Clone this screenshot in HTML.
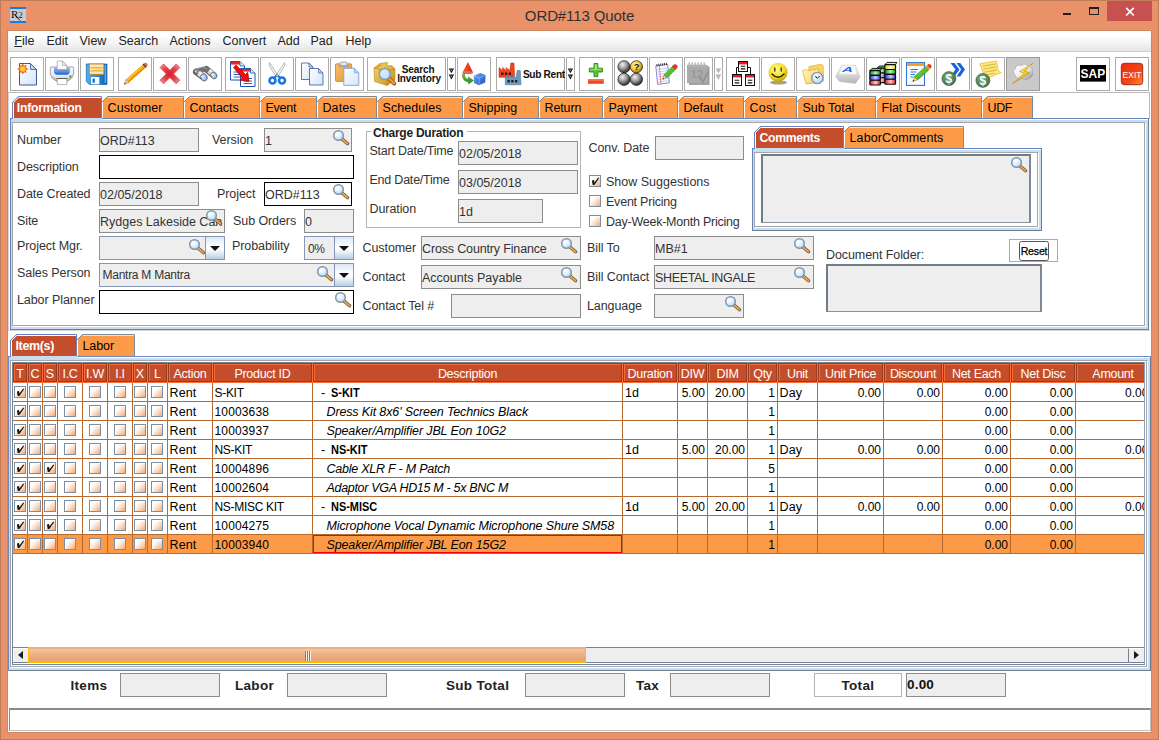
<!DOCTYPE html><html><head><meta charset="utf-8"><title>ORD#113 Quote</title><style>
*{box-sizing:border-box;margin:0;padding:0}
html,body{width:1159px;height:740px;overflow:hidden;background:#E9926A;font-family:"Liberation Sans",sans-serif;font-size:12.5px;color:#333}
.a{position:absolute}
.l{position:absolute;white-space:nowrap;line-height:14px;height:14px;color:#333;letter-spacing:-.08px}
.f{position:absolute;background:#EEE;border:1px solid #8C8C8C;white-space:nowrap;overflow:hidden;color:#333;line-height:14px;padding:5px 0 0 0;letter-spacing:0}
.f.w{background:#fff;border:1px solid #000}
.f.c{border-color:#8496B4;}
.ab{position:absolute;border:1px solid #8496B4;background:linear-gradient(#DCE7F3,#fff 45%,#fff 55%,#B8CFE5)}
.ab:after{content:"";position:absolute;left:4px;top:9px;border:5px solid transparent;border-top-color:#111;border-bottom-width:0}
.b{font-weight:bold}
.cb{position:absolute;width:12px;height:12px;border:1px solid #7C8EA4;box-shadow:inset 1px 1px 0 #fff;background:linear-gradient(135deg,#fff 28%,#FCE3D0 55%,#F6A874 100%)}
.cb.k:after{content:"";position:absolute;left:0;top:0;width:10px;height:10px;background:#151515;clip-path:polygon(1.9px 4.5px,4px 4px,4.4px 6.4px,8.3px 1.6px,9.1px 2.3px,4.4px 9px,2.7px 9px)}
.th{position:absolute;top:363px;height:19px;background:#C44D2C;border:1px solid #DC6A3E;outline:0;color:#fff;text-align:center;line-height:14px;padding-top:2px;white-space:nowrap;overflow:hidden}
.td{position:absolute;white-space:nowrap;line-height:14px;height:14px;color:#000;letter-spacing:.1px}
.r{text-align:right}
.i{font-style:italic}
</style></head><body>
<div class="a" style="left:0;top:0;width:1159px;height:740px;background:#E9926A;border:1px solid #C17C5A"></div>
<div id="root" class="a" style="left:0;top:0;width:1159px;height:740px">
<div class="a" style="left:0;top:5.7px;width:1159px;text-align:center;font-size:15px;line-height:20px;color:#303030;letter-spacing:-.1px">ORD#113 Quote</div>
<div class="a" style="left:10px;top:7px;width:16px;height:16px;background:#C8CCD2;border-top:2px solid #1F7AD2;border-bottom:2px solid #1F7AD2"></div>
<div class="a" style="left:11px;top:8px;font-family:'Liberation Serif',serif;font-size:11px;line-height:13px;color:#111">R</div>
<div class="a" style="left:18.5px;top:10px;font-family:'Liberation Serif',serif;font-size:8.5px;line-height:10px;color:#111">2</div>
<svg class="a" style="left:10px;top:7px" width="16" height="16"><path d="M5 8 L10 13.5" stroke="#111" stroke-width="1"/></svg>
<div class="a" style="left:1107px;top:1px;width:45px;height:20px;background:#C75050"></div>
<svg class="a" style="left:1107px;top:1px" width="45" height="20"><path d="M19.2 6.9 L26.8 14.5 M26.8 6.9 L19.2 14.5" stroke="#fff" stroke-width="1.7"/></svg>
<div class="a" style="left:1063px;top:13px;width:8px;height:2px;background:#1E1E1E"></div>
<div class="a" style="left:1089px;top:7px;width:10px;height:8px;border:1px solid #1E1E1E;border-top-width:2px"></div>
<div class="a" style="left:7px;top:30px;width:1145px;height:703px;background:#D08660"></div>
<div class="a" style="left:8px;top:31px;width:1143px;height:701px;background:#fff"></div>
<div class="a" style="left:8px;top:31px;width:1143px;height:20px;background:linear-gradient(#fff,#fff 25%,#E6E6E6)"></div>
<div class="a" style="left:8px;top:51px;width:1143px;height:1px;background:#CFCFCF"></div>
<div class="l" style="left:14.3px;top:34px;color:#222;letter-spacing:0"><u>F</u>ile</div>
<div class="l" style="left:46.5px;top:34px;color:#222;letter-spacing:0">Edit</div>
<div class="l" style="left:79.5px;top:34px;color:#222;letter-spacing:0">View</div>
<div class="l" style="left:118.5px;top:34px;color:#222;letter-spacing:0">Search</div>
<div class="l" style="left:169.5px;top:34px;color:#222;letter-spacing:0">Actions</div>
<div class="l" style="left:222.5px;top:34px;color:#222;letter-spacing:0">Convert</div>
<div class="l" style="left:277.5px;top:34px;color:#222;letter-spacing:0">Add</div>
<div class="l" style="left:310.5px;top:34px;color:#222;letter-spacing:0">Pad</div>
<div class="l" style="left:345.5px;top:34px;color:#222;letter-spacing:0">Help</div>
<div class="a" style="left:10px;top:57px;width:34px;height:34px;border:1px solid #ABABAB;background:#fff"></div>
<div class="a" style="left:45px;top:57px;width:34px;height:34px;border:1px solid #ABABAB;background:#fff"></div>
<div class="a" style="left:80px;top:57px;width:34px;height:34px;border:1px solid #ABABAB;background:#fff"></div>
<div class="a" style="left:118px;top:57px;width:34px;height:34px;border:1px solid #ABABAB;background:#fff"></div>
<div class="a" style="left:153px;top:57px;width:34px;height:34px;border:1px solid #ABABAB;background:#fff"></div>
<div class="a" style="left:188px;top:57px;width:34px;height:34px;border:1px solid #ABABAB;background:#fff"></div>
<div class="a" style="left:225px;top:57px;width:34px;height:34px;border:1px solid #ABABAB;background:#fff"></div>
<div class="a" style="left:260px;top:57px;width:34px;height:34px;border:1px solid #ABABAB;background:#fff"></div>
<div class="a" style="left:295px;top:57px;width:34px;height:34px;border:1px solid #ABABAB;background:#fff"></div>
<div class="a" style="left:330px;top:57px;width:34px;height:34px;border:1px solid #ABABAB;background:#fff"></div>
<div class="a" style="left:367px;top:57px;width:79px;height:34px;border:1px solid #ABABAB;background:#fff"></div>
<div class="a" style="left:447px;top:57px;width:9px;height:34px;border:1px solid #ABABAB;background:#fff"></div>
<div class="a" style="left:457px;top:57px;width:34px;height:34px;border:1px solid #ABABAB;background:#fff"></div>
<div class="a" style="left:496px;top:57px;width:69px;height:34px;border:1px solid #ABABAB;background:#fff"></div>
<div class="a" style="left:566px;top:57px;width:9px;height:34px;border:1px solid #ABABAB;background:#fff"></div>
<div class="a" style="left:579px;top:57px;width:34px;height:34px;border:1px solid #ABABAB;background:#fff"></div>
<div class="a" style="left:614px;top:57px;width:34px;height:34px;border:1px solid #ABABAB;background:#fff"></div>
<div class="a" style="left:649px;top:57px;width:34px;height:34px;border:1px solid #ABABAB;background:#fff"></div>
<div class="a" style="left:684px;top:57px;width:29px;height:34px;border:1px solid #ABABAB;background:#fff"></div>
<div class="a" style="left:714px;top:57px;width:9px;height:34px;border:1px solid #ABABAB;background:#fff"></div>
<div class="a" style="left:726px;top:57px;width:34px;height:34px;border:1px solid #ABABAB;background:#fff"></div>
<div class="a" style="left:761px;top:57px;width:34px;height:34px;border:1px solid #ABABAB;background:#fff"></div>
<div class="a" style="left:796px;top:57px;width:34px;height:34px;border:1px solid #ABABAB;background:#fff"></div>
<div class="a" style="left:831px;top:57px;width:34px;height:34px;border:1px solid #ABABAB;background:#fff"></div>
<div class="a" style="left:866px;top:57px;width:34px;height:34px;border:1px solid #ABABAB;background:#fff"></div>
<div class="a" style="left:901px;top:57px;width:34px;height:34px;border:1px solid #ABABAB;background:#fff"></div>
<div class="a" style="left:936px;top:57px;width:34px;height:34px;border:1px solid #ABABAB;background:#fff"></div>
<div class="a" style="left:971px;top:57px;width:34px;height:34px;border:1px solid #ABABAB;background:#fff"></div>
<div class="a" style="left:1006px;top:57px;width:34px;height:34px;border:1px solid #9A9A9A;background:#C9C9C9"></div>
<div class="a" style="left:1076px;top:57px;width:34px;height:34px;border:1px solid #ABABAB;background:#fff"></div>
<div class="a" style="left:1115px;top:57px;width:34px;height:34px;border:1px solid #ABABAB;background:#fff"></div>
<div class="a" style="left:8px;top:92px;width:1142px;height:1px;background:#B9B9B9"></div>
<div class="a" style="left:1149px;top:92px;width:1px;height:27px;background:#B9B9B9"></div>
<svg width="0" height="0" style="position:absolute"><defs>
<linearGradient id="gpage" x1="0" y1="0" x2="1" y2="1"><stop offset="0" stop-color="#fff"/><stop offset="1" stop-color="#D3E4F7"/></linearGradient>
<radialGradient id="gsun2"><stop offset="0" stop-color="#FFE840"/><stop offset=".6" stop-color="#FFC220"/><stop offset="1" stop-color="#F86A20"/></radialGradient>
<radialGradient id="gsun"><stop offset="0" stop-color="#FFE033"/><stop offset=".45" stop-color="#FFC21A"/><stop offset=".7" stop-color="#F2451E"/><stop offset="1" stop-color="#F2451E" stop-opacity=".15"/></radialGradient>
<linearGradient id="gprn" x1="0" y1="0" x2="0" y2="1"><stop offset="0" stop-color="#EDEDED"/><stop offset=".55" stop-color="#E4E4E4"/><stop offset="1" stop-color="#A6A6A6"/></linearGradient>
<linearGradient id="gblue" x1="0" y1="0" x2="0" y2="1"><stop offset="0" stop-color="#8CBAF8"/><stop offset=".55" stop-color="#5C98F0"/><stop offset="1" stop-color="#1C5CE0"/></linearGradient>
<linearGradient id="gflop" x1="0" y1="0" x2="1" y2="0"><stop offset="0" stop-color="#4FB0EE"/><stop offset=".6" stop-color="#1D86D8"/><stop offset="1" stop-color="#0E62B0"/></linearGradient>
<radialGradient id="gx" cx=".5" cy=".5" r=".6"><stop offset="0" stop-color="#DE1B22"/><stop offset=".6" stop-color="#E2464E"/><stop offset="1" stop-color="#EE9096"/></radialGradient>
<radialGradient id="glens" cx=".4" cy=".35" r=".7"><stop offset="0" stop-color="#E4F1FF"/><stop offset=".6" stop-color="#9CC6F6"/><stop offset="1" stop-color="#6CA4EA"/></radialGradient>
<linearGradient id="gbino" x1="0" y1="0" x2="0" y2="1"><stop offset="0" stop-color="#B8B8B8"/><stop offset=".5" stop-color="#6E6E6E"/><stop offset="1" stop-color="#3C3C3C"/></linearGradient>
<linearGradient id="gclip" x1="0" y1="0" x2="1" y2="1"><stop offset="0" stop-color="#F7C070"/><stop offset="1" stop-color="#E89530"/></linearGradient>
<linearGradient id="gbox" x1="0" y1="0" x2="1" y2="1"><stop offset="0" stop-color="#F8D868"/><stop offset="1" stop-color="#C89018"/></linearGradient>
<linearGradient id="gcube" x1="0" y1="0" x2="1" y2="1"><stop offset="0" stop-color="#6FA8F8"/><stop offset="1" stop-color="#1F4FC0"/></linearGradient>
<linearGradient id="gcone" x1="0" y1="0" x2="1" y2="0"><stop offset="0" stop-color="#F8603C"/><stop offset="1" stop-color="#D81E10"/></linearGradient>
<linearGradient id="ggreen" x1="0" y1="0" x2="0" y2="1"><stop offset="0" stop-color="#6ED04A"/><stop offset="1" stop-color="#1E8A1A"/></linearGradient>
<radialGradient id="gball" cx=".38" cy=".32" r=".75"><stop offset="0" stop-color="#F4F4F4"/><stop offset=".45" stop-color="#9C9C9C"/><stop offset=".85" stop-color="#3A3A3A"/><stop offset="1" stop-color="#111"/></radialGradient>
<radialGradient id="gbally" cx=".4" cy=".35" r=".75"><stop offset="0" stop-color="#FFF6B0"/><stop offset=".5" stop-color="#F6C82A"/><stop offset=".9" stop-color="#8A6A10"/><stop offset="1" stop-color="#222"/></radialGradient>
<radialGradient id="gsmile" cx=".42" cy=".35" r=".75"><stop offset="0" stop-color="#FFFB9A"/><stop offset=".55" stop-color="#F4DC22"/><stop offset=".9" stop-color="#B79A10"/><stop offset="1" stop-color="#7A6408"/></radialGradient>
<linearGradient id="gfold" x1="0" y1="0" x2="1" y2="1"><stop offset="0" stop-color="#FFF6C4"/><stop offset="1" stop-color="#F6D060"/></linearGradient>
<radialGradient id="gclock" cx=".4" cy=".35" r=".7"><stop offset="0" stop-color="#fff"/><stop offset="1" stop-color="#A8D8F8"/></radialGradient>
<linearGradient id="gkey" x1="0" y1="0" x2="0" y2="1"><stop offset="0" stop-color="#fff"/><stop offset="1" stop-color="#B4B4B4"/></linearGradient>
<radialGradient id="gdol" cx=".4" cy=".35" r=".75"><stop offset="0" stop-color="#7FA878"/><stop offset="1" stop-color="#3D6E3A"/></radialGradient>
<linearGradient id="gexit" x1="0" y1="0" x2="1" y2="1"><stop offset="0" stop-color="#F02A10"/><stop offset=".6" stop-color="#F04818"/><stop offset="1" stop-color="#F8982C"/></linearGradient>
<linearGradient id="gpen" x1="0" y1="0" x2="1" y2="1"><stop offset="0" stop-color="#8EE04A"/><stop offset="1" stop-color="#2C9A1C"/></linearGradient>
<linearGradient id="gbG" x1="0" y1="0" x2="1" y2="0"><stop offset="0" stop-color="#1C8A1C"/><stop offset=".55" stop-color="#B8F0B8"/><stop offset="1" stop-color="#1C8A1C"/></linearGradient>
<linearGradient id="gbB" x1="0" y1="0" x2="1" y2="0"><stop offset="0" stop-color="#2030D8"/><stop offset=".55" stop-color="#C8D0FF"/><stop offset="1" stop-color="#2030D8"/></linearGradient>
<linearGradient id="gbR" x1="0" y1="0" x2="1" y2="0"><stop offset="0" stop-color="#D81C1C"/><stop offset=".55" stop-color="#FFC8C8"/><stop offset="1" stop-color="#D81C1C"/></linearGradient>
<linearGradient id="gbY" x1="0" y1="0" x2="1" y2="0"><stop offset="0" stop-color="#D8D018"/><stop offset=".55" stop-color="#FFFFC0"/><stop offset="1" stop-color="#D8D018"/></linearGradient>
<linearGradient id="gcloud" x1="0" y1="0" x2="1" y2="1"><stop offset="0" stop-color="#fff"/><stop offset=".5" stop-color="#F0F0F0"/><stop offset="1" stop-color="#8A8A8A"/></linearGradient>
</defs></svg>
<svg class="a" style="left:10px;top:57px;font-family:'Liberation Sans',sans-serif" width="34" height="34" viewBox="0 0 34 34"><path d="M9.5 6.5 H20.5 L26.5 12.5 V28.0 H9.5 Z" fill="url(#gpage)" stroke="#3D5A99" stroke-width="1"/><path d="M20.5 6.5 V12.5 H26.5 Z" fill="#BCD6F2" stroke="#3D5A99" stroke-width="0.8"/><path d="M18.3 11.9 L15.8 13.2 L16.7 15.9 L14.0 15.0 L12.7 17.5 L11.4 15.0 L8.7 15.9 L9.6 13.2 L7.1 11.9 L9.6 10.6 L8.7 7.9 L11.4 8.8 L12.7 6.3 L14.0 8.8 L16.7 7.9 L15.8 10.6 Z" fill="#F0401C" opacity=".9"/><circle cx="12.7" cy="11.9" r="3.6" fill="url(#gsun2)"/></svg>
<svg class="a" style="left:45px;top:57px;font-family:'Liberation Sans',sans-serif" width="34" height="34" viewBox="0 0 34 34"><path d="M5.3 10.4 Q5.3 9.9 6 9.9 H28 Q28.7 9.9 28.7 10.4 V17 Q28 21.6 22 24.6 H12 Q6 21.6 5.3 17 Z" fill="url(#gprn)" stroke="#8E8E8E" stroke-width=".7"/><path d="M6.5 11 H27.5 V16.5 Q26 20 21.5 22.5 H12.5 Q8 20 6.5 16.5 Z" fill="#fff" opacity=".4"/><path d="M9 10.2 H24.8 V14.6 Q24.8 17.7 21.6 17.7 H12.2 Q9 17.7 9 14.6 Z" fill="url(#gblue)"/><rect x="11.9" y="12" width="10.2" height="1.7" fill="#8A8A9C"/><path d="M12.2 12.6 V4 H17.4 L21.8 8.4 V12.6 Z" fill="#FAFAFA" stroke="#A2A2A2" stroke-width=".7"/><path d="M17.4 4 V8.4 H21.8 Z" fill="#E4E4E4" stroke="#A2A2A2" stroke-width=".6"/><rect x="12.2" y="21.6" width="9.6" height="6" fill="#FDFDFD" stroke="#A0A0A0" stroke-width=".7"/><path d="M11.6 21.5 H22.4" stroke="#5A5A5A" stroke-width="1"/><circle cx="25.3" cy="19.4" r="1.2" fill="#28B428"/></svg>
<svg class="a" style="left:80px;top:57px;font-family:'Liberation Sans',sans-serif" width="34" height="34" viewBox="0 0 34 34"><path d="M6.3 7 H27 V27.5 H9.5 L6.3 24.5 Z" fill="url(#gflop)" stroke="#0F62B4" stroke-width=".7"/><rect x="9.3" y="7" width="14.5" height="10.3" fill="#FBE9B8" stroke="#C8862A" stroke-width=".9"/><path d="M10.5 10.7 H22.6 M10.5 13.7 H22.6" stroke="#F2B23A" stroke-width="1.6"/><rect x="11" y="20" width="8.3" height="7.3" fill="#F4F8FC"/><rect x="12.6" y="21.6" width="2.2" height="4" fill="#1D63C4"/><rect x="24.6" y="8" width="1.6" height="18" fill="#7CC6F4" opacity=".7"/></svg>
<svg class="a" style="left:118px;top:57px;font-family:'Liberation Sans',sans-serif" width="34" height="34" viewBox="0 0 34 34"><path d="M8 26 L11 19 L14 17 L9 27 Z" fill="#DDD" opacity=".7"/><path d="M6.3 27.6 L7.6 22.4 L11.4 25.6 Z" fill="#E8C49A" stroke="#9A7A5A" stroke-width=".4"/><path d="M6.3 27.6 L6.8 25.6 L7.9 26.5 Z" fill="#333"/><path d="M7.9 22.6 L24.6 7.5 L27.7 10.7 L11 25.4 Z" fill="#F5A50A"/><path d="M8.9 23.4 L25.5 8.5" stroke="#FFD060" stroke-width="1"/><path d="M10.4 24.9 L27.1 10.1" stroke="#D07F00" stroke-width=".9"/><path d="M24.6 7.5 L25.8 6.5 L28.9 9.7 L27.7 10.7 Z" fill="#333"/><path d="M25.8 6.5 Q27.4 5 29.2 6.6 Q30.4 8.2 28.9 9.7 Z" fill="#F46A3C"/></svg>
<svg class="a" style="left:153px;top:57px;font-family:'Liberation Sans',sans-serif" width="34" height="34" viewBox="0 0 34 34"><path d="M7 10.6 L10.6 7 L16.9 13.3 L23.2 7 L26.8 10.6 L20.5 16.9 L26.8 23.2 L23.2 26.8 L16.9 20.5 L10.6 26.8 L7 23.2 L13.3 16.9 Z" fill="url(#gx)" stroke="#D8434A" stroke-width=".8" stroke-linejoin="round"/></svg>
<svg class="a" style="left:188px;top:57px;font-family:'Liberation Sans',sans-serif" width="34" height="34" viewBox="0 0 34 34"><path d="M8.4 14.8 L15.8 20.4" stroke="#5E5E5E" stroke-width="6.8" stroke-linecap="round"/><path d="M18.4 12.2 L25.8 18.5" stroke="#6A6A6A" stroke-width="6.4" stroke-linecap="round"/><path d="M7 11.8 L15.8 9.4 L21 12 L18.6 15.6 L11.4 14.4 Z" fill="#727272"/><path d="M8 12 L15.6 10 L19.6 12" stroke="#A4A4A4" stroke-width=".8" fill="none"/><path d="M8.4 13.8 L15.8 19.6" stroke="#909090" stroke-width="3.4" stroke-linecap="round"/><path d="M10.6 16 L15.2 19.6" stroke="#E2E2E2" stroke-width="5" stroke-linecap="butt"/><path d="M11 14.8 L16 18.7" stroke="#FAFAFA" stroke-width="1.6"/><path d="M20.8 13.8 L25.2 17.6" stroke="#D6D6D6" stroke-width="4.8" stroke-linecap="butt"/><path d="M21.4 12.8 L26 16.6" stroke="#F6F6F6" stroke-width="1.5"/><circle cx="7.6" cy="14.6" r="1" fill="#E8E8E8" opacity=".8"/><ellipse cx="15.9" cy="20.4" rx="3.1" ry="3.7" fill="url(#glens)" stroke="#5C5C5C" stroke-width=".7" transform="rotate(-35 15.9 20.4)"/><ellipse cx="25.8" cy="18.5" rx="2.9" ry="3.5" fill="url(#glens)" stroke="#5C5C5C" stroke-width=".7" transform="rotate(-35 25.8 18.5)"/></svg>
<svg class="a" style="left:225px;top:57px;font-family:'Liberation Sans',sans-serif" width="34" height="34" viewBox="0 0 34 34"><path d="M5.5 4.5 H15.0 L19.5 9.0 V23.0 H5.5 Z" fill="#fff" stroke="#2150B0" stroke-width="1"/><rect x="6.0" y="5.0" width="9" height="2.6" fill="#F0281C"/><path d="M15.0 4.5 V9.0 H19.5" fill="#DCE8F8" stroke="#2150B0" stroke-width=".8"/><path d="M8.5 15.0 H16.5 M8.5 17.5 H16.5 M8.5 20.0 H16.5" stroke="#2150B0" stroke-width=".9"/><path d="M15.5 11.5 H25.5 L30.0 16.0 V29.5 H15.5 Z" fill="#fff" stroke="#2150B0" stroke-width="1"/><rect x="16.0" y="12.0" width="9.5" height="2.6" fill="#F0281C"/><path d="M25.5 11.5 V16.0 H30.0" fill="#DCE8F8" stroke="#2150B0" stroke-width=".8"/><path d="M18.5 21.5 H27.0 M18.5 24.0 H27.0 M18.5 26.5 H27.0" stroke="#2150B0" stroke-width=".9"/><path d="M8.5 10.5 L11 8 L20.5 17.5 L22.8 15.2 L24 24.5 L14.8 23.2 L17.1 20.9 Z" fill="#F00A0A" stroke="#8A0000" stroke-width=".6" stroke-linejoin="round"/></svg>
<svg class="a" style="left:260px;top:57px;font-family:'Liberation Sans',sans-serif" width="34" height="34" viewBox="0 0 34 34"><path d="M9.5 5.5 Q8.5 7 10 10 L16.5 20 L18.3 18.6 Z" fill="#F2F2F2" stroke="#9C9C9C" stroke-width=".7"/><path d="M24.5 5.5 Q25.5 7 24 10 L17.5 20 L15.7 18.6 Z" fill="#F8F8F8" stroke="#9C9C9C" stroke-width=".7"/><circle cx="17" cy="17.6" r=".9" fill="#777"/><circle cx="12.5" cy="23.5" r="3" fill="none" stroke="#1F74E0" stroke-width="2.6"/><circle cx="22" cy="23.5" r="3" fill="none" stroke="#1F74E0" stroke-width="2.6"/><path d="M14.2 21 L16.3 18.8 M20.3 21 L17.9 18.8" stroke="#1F74E0" stroke-width="2"/></svg>
<svg class="a" style="left:295px;top:57px;font-family:'Liberation Sans',sans-serif" width="34" height="34" viewBox="0 0 34 34"><path d="M6.5 6 H14.0 L18.0 10 V22.5 H6.5 Z" fill="url(#gpage)" stroke="#44609C" stroke-width="0.85"/><path d="M14.0 6 V10 H18.0 Z" fill="#BCD6F2" stroke="#44609C" stroke-width="0.68"/><path d="M14.5 11.5 H23.5 L28.0 16.0 V28.0 H14.5 Z" fill="url(#gpage)" stroke="#44609C" stroke-width="0.85"/><path d="M23.5 11.5 V16.0 H28.0 Z" fill="#BCD6F2" stroke="#44609C" stroke-width="0.68"/></svg>
<svg class="a" style="left:330px;top:57px;font-family:'Liberation Sans',sans-serif" width="34" height="34" viewBox="0 0 34 34"><rect x="5.5" y="6.8" width="16.2" height="17.6" rx="1.2" fill="url(#gclip)" stroke="#C98224" stroke-width=".8"/><path d="M10 9 V6.5 Q10 5 11.5 5 H15.8 Q17.2 5 17.2 6.5 V9 Z" fill="#E8E8E8" stroke="#8A8A8A" stroke-width=".7"/><rect x="9" y="8.2" width="9.2" height="1.8" fill="#B8B8B8" stroke="#888" stroke-width=".4"/><path d="M13.8 11.3 H24.3 L28.8 15.8 V28.3 H13.8 Z" fill="url(#gpage)" stroke="#8CA4D8" stroke-width="1"/><path d="M24.3 11.3 V15.8 H28.8 Z" fill="#BCD6F2" stroke="#8CA4D8" stroke-width="0.8"/></svg>
<svg class="a" style="left:367px;top:57px;font-family:'Liberation Sans',sans-serif" width="79" height="34" viewBox="0 0 79 34"><path d="M7 11 L13 6.5 L20.5 5.5 L20 9 L25 8.5 L28 12 V23 L20 28.5 L7.5 24.5 Z" fill="url(#gbox)" stroke="#B8861A" stroke-width=".6"/><path d="M7 11 L20 14 L28 12 M20 14 V28.5" stroke="#B07C10" stroke-width=".7" fill="none"/><path d="M7 11 L13 6.5 L15 8 L9.5 12 Z" fill="#E0A828"/><path d="M21.5 20.8 L27.3 26.6" stroke="#8E4A14" stroke-width="3.8" stroke-linecap="round"/><path d="M21.8 21.1 L27.1 26.4" stroke="#F59A3A" stroke-width="2.2" stroke-linecap="round"/><circle cx="17.8" cy="17" r="5.5" fill="url(#glens)" stroke="#8C9BAD" stroke-width="1.4"/><circle cx="17.8" cy="17" r="4.6" fill="#D8EEFC" opacity=".75"/><text x="34.8" y="15.6" font-size="10" font-weight="bold" fill="#111" letter-spacing="-.1">Search</text><text x="30.2" y="24.7" font-size="10" font-weight="bold" fill="#111" letter-spacing="-.15">Inventory</text></svg>
<svg class="a" style="left:447px;top:57px;font-family:'Liberation Sans',sans-serif" width="9" height="34" viewBox="0 0 9 34"><path d="M1.7 11.4 H7.1 L4.4 16.2 Z" fill="#111"/><path d="M3.6 12.4 L4.4 13.6 L5.2 12.4" stroke="#fff" stroke-width=".55" fill="none"/><path d="M1.7 17.6 H7.1 L4.4 22.4 Z" fill="#111"/><path d="M3.6 18.6 L4.4 19.8 L5.2 18.6" stroke="#fff" stroke-width=".55" fill="none"/></svg>
<svg class="a" style="left:457px;top:57px;font-family:'Liberation Sans',sans-serif" width="34" height="34" viewBox="0 0 34 34"><path d="M10.9 5 L16 15.5 Q11 18 5.5 15.5 Z" fill="url(#gcone)"/><ellipse cx="10.8" cy="15.6" rx="5.3" ry="1.6" fill="#E86A50"/><path d="M7 17.5 Q6.5 22.5 11 23.5 L11 21 L16 24.5 L11 28 L11 26 Q4.5 25 5 18 Z" fill="url(#ggreen)" stroke="#1C7A16" stroke-width=".5" transform="translate(.5 -1)"/><path d="M16.8 18.8 L23 16 L28.6 18 L28.2 25.5 L22 28.2 L17 26 Z" fill="url(#gcube)"/><path d="M16.8 18.8 L22.4 20.8 L28.6 18 M22.4 20.8 L22 28.2" stroke="#9CC4FF" stroke-width=".6" fill="none"/></svg>
<svg class="a" style="left:496px;top:57px;font-family:'Liberation Sans',sans-serif" width="69" height="34" viewBox="0 0 69 34"><path d="M3 20.3 V10.5 L6.6 13.5 V10.5 L10.2 13.5 V10.5 L13.8 13.5 L14.8 6 H18 L18.7 20.3 Z" fill="#F4421C" stroke="#C02A10" stroke-width=".5"/><rect x="5.2" y="15.6" width="2.2" height="2.2" fill="#111"/><rect x="9" y="15.6" width="2.2" height="2.2" fill="#111"/><rect x="12.8" y="15.6" width="2.2" height="2.2" fill="#111"/><path d="M9.3 27.8 V18.0 L12.9 21.0 V18.0 L16.5 21.0 V18.0 L20.1 21.0 L21.1 13.5 H24.3 L25.0 27.8 Z" fill="#6E98B8" stroke="#4A6E8C" stroke-width=".5"/><rect x="11.5" y="23.1" width="2.2" height="2.2" fill="#111"/><rect x="15.3" y="23.1" width="2.2" height="2.2" fill="#111"/><rect x="19.1" y="23.1" width="2.2" height="2.2" fill="#111"/><text x="26.9" y="20.9" font-size="10.2" font-weight="bold" fill="#111" letter-spacing="-.35">Sub Rent</text></svg>
<svg class="a" style="left:566px;top:57px;font-family:'Liberation Sans',sans-serif" width="9" height="34" viewBox="0 0 9 34"><path d="M1.7 11.4 H7.1 L4.4 16.2 Z" fill="#111"/><path d="M3.6 12.4 L4.4 13.6 L5.2 12.4" stroke="#fff" stroke-width=".55" fill="none"/><path d="M1.7 17.6 H7.1 L4.4 22.4 Z" fill="#111"/><path d="M3.6 18.6 L4.4 19.8 L5.2 18.6" stroke="#fff" stroke-width=".55" fill="none"/></svg>
<svg class="a" style="left:579px;top:57px;font-family:'Liberation Sans',sans-serif" width="34" height="34" viewBox="0 0 34 34"><path d="M15 6.5 H18.8 V11.2 H23.5 V15 H18.8 V19.7 H15 V15 H10.3 V11.2 H15 Z" fill="#62C23C" stroke="#1E8C14" stroke-width=".9"/><path d="M15.9 7.4 H17.9 V12.1 H22.6 V12.8 H11.2 V12.1 H15.9 Z" fill="#B4EC98" opacity=".85"/><rect x="9" y="22.2" width="15.8" height="4.6" fill="#F0481E"/><rect x="9" y="22.2" width="15.8" height="1.6" fill="#F87850"/></svg>
<svg class="a" style="left:614px;top:57px;font-family:'Liberation Sans',sans-serif" width="34" height="34" viewBox="0 0 34 34"><circle cx="10" cy="9.8" r="6.1" fill="url(#gball)" stroke="#111" stroke-width=".7"/><circle cx="10" cy="22.3" r="6.1" fill="url(#gball)" stroke="#111" stroke-width=".7"/><circle cx="22.4" cy="22.3" r="6.1" fill="url(#gball)" stroke="#111" stroke-width=".7"/><circle cx="22.4" cy="9.8" r="6.1" fill="url(#gbally)" stroke="#111" stroke-width=".7"/><text x="19.7" y="13.2" font-size="9.5" font-weight="bold" fill="#222">?</text></svg>
<svg class="a" style="left:649px;top:57px;font-family:'Liberation Sans',sans-serif" width="34" height="34" viewBox="0 0 34 34"><path d="M6.8 9 L18.6 7.4 L20.4 25.8 L8.6 27.4 Z" fill="#FCFCFF" stroke="#6A6AC8" stroke-width=".8"/><path d="M8.2 12.5 L18.8 11 M8.5 15 L19 13.5 M8.8 17.5 L19.2 16 M9 20 L19.5 18.5 M9.3 22.5 L19.8 21 M9.6 25 L20 23.5" stroke="#9AB0F0" stroke-width=".6"/><path d="M10.3 9 L12 26.8" stroke="#F07070" stroke-width=".9"/><path d="M7.5 8.2 L18.5 6.8" stroke="#333" stroke-width="2.2" stroke-dasharray="1 .9"/><path d="M13.6 22.4 L15 17.8 L18.2 20.6 Z" fill="#F0D0A0" stroke="#8A6A4A" stroke-width=".4"/><path d="M13.6 22.4 L14.1 20.8 L15.2 21.8 Z" fill="#333"/><path d="M15 17.8 L23.2 9.6 L26.4 12.6 L18.2 20.6 Z" fill="url(#gpen)" stroke="#1E7A14" stroke-width=".5"/><path d="M23.2 9.6 Q25 6.6 27.6 8 Q29.6 10 26.4 12.6 Z" fill="#E83A1C" stroke="#A01A0A" stroke-width=".4"/></svg>
<svg class="a" style="left:684px;top:57px;font-family:'Liberation Sans',sans-serif" width="29" height="34" viewBox="0 0 29 34"><rect x="5" y="9.5" width="20.5" height="18.4" fill="#9C9C9C"/><rect x="3" y="7.8" width="20.5" height="18.4" fill="#ABABAB"/><path d="M5.2 6 V9.8 M8.2 6 V9.8 M11.2 6 V9.8 M14.2 6 V9.8 M17.2 6 V9.8 M20.2 6 V9.8" stroke="#B8B8B8" stroke-width="1.6" stroke-linecap="round"/><text x="6.5" y="21" font-size="11.5" font-weight="bold" fill="#9A9A9A">12</text><path d="M15.5 20 L19 25 L24 15" stroke="#939393" stroke-width="1.8" fill="none"/></svg>
<svg class="a" style="left:714px;top:57px;font-family:'Liberation Sans',sans-serif" width="9" height="34" viewBox="0 0 9 34"><path d="M1.7 11.4 H7.1 L4.4 16.2 Z" fill="#A8A8A8"/><path d="M3.6 12.4 L4.4 13.6 L5.2 12.4" stroke="#fff" stroke-width=".55" fill="none"/><path d="M1.7 17.6 H7.1 L4.4 22.4 Z" fill="#A8A8A8"/><path d="M3.6 18.6 L4.4 19.8 L5.2 18.6" stroke="#fff" stroke-width=".55" fill="none"/></svg>
<svg class="a" style="left:726px;top:57px;font-family:'Liberation Sans',sans-serif" width="34" height="34" viewBox="0 0 34 34"><path d="M10.5 17.5 V10.5 H24.5 V17.5" stroke="#111" stroke-width="1" fill="none"/><rect x="12.5" y="4.5" width="9" height="10" fill="#fff" stroke="#111" stroke-width="1"/><rect x="13.0" y="5.0" width="8" height="2.4" fill="#F0141E"/><path d="M14.7 9.2 H19.3 M14.7 11.9 H19.3" stroke="#111" stroke-width="1.1"/><rect x="6.5" y="17.5" width="9" height="11" fill="#fff" stroke="#111" stroke-width="1"/><rect x="7.0" y="18.0" width="8" height="2.4" fill="#F0141E"/><path d="M8.7 23.2 H13.3 M8.7 25.9 H13.3" stroke="#111" stroke-width="1.1"/><rect x="19.5" y="17.5" width="9" height="11" fill="#fff" stroke="#111" stroke-width="1"/><rect x="20.0" y="18.0" width="8" height="2.4" fill="#F0141E"/><path d="M21.7 23.2 H26.3 M21.7 25.9 H26.3" stroke="#111" stroke-width="1.1"/></svg>
<svg class="a" style="left:761px;top:57px;font-family:'Liberation Sans',sans-serif" width="34" height="34" viewBox="0 0 34 34"><ellipse cx="17.5" cy="25.5" rx="8.5" ry="2" fill="#6A5208" opacity=".55"/><circle cx="17" cy="15.3" r="9.5" fill="url(#gsmile)"/><path d="M13.8 10.8 V14 M20.2 10.8 V14" stroke="#3A3208" stroke-width="1.3" stroke-linecap="round"/><path d="M11 17 Q17 23.5 23 17" stroke="#2A2406" stroke-width="1.4" fill="none" stroke-linecap="round"/></svg>
<svg class="a" style="left:796px;top:57px;font-family:'Liberation Sans',sans-serif" width="34" height="34" viewBox="0 0 34 34"><path d="M13 9.5 L24.8 7.2 L27.2 8.5 L27.5 24 L12 26.5 Z" fill="#F8D468" stroke="#E8A020" stroke-width=".6"/><path d="M6.5 13.5 L10.5 12.5 L12 13.8 L22.5 11.8 L24 25 L10 27 Z" fill="url(#gfold)" stroke="#E0A020" stroke-width=".6"/><circle cx="21.3" cy="21" r="5.6" fill="url(#gclock)" stroke="#8A98A8" stroke-width="1.4"/><path d="M19.3 19 L21.3 21.4 L23.6 19" stroke="#222" stroke-width="1" fill="none"/></svg>
<svg class="a" style="left:831px;top:57px;font-family:'Liberation Sans',sans-serif" width="34" height="34" viewBox="0 0 34 34"><path d="M4.5 19.5 L11 8 L24.5 8.5 L29 20 L24.5 26.5 L8.5 24.5 Z" fill="url(#gkey)" stroke="#C4C4C4" stroke-width=".6"/><path d="M11.5 8.6 L24 9 L26 17.5 L8 17 Z" fill="#FAFAFA" stroke="#DADADA" stroke-width=".5"/><text transform="translate(10.2 14.8) skewX(-28) scale(1.35 .66)" font-size="11" font-weight="bold" fill="#1F62E0">A</text></svg>
<svg class="a" style="left:866px;top:57px;font-family:'Liberation Sans',sans-serif" width="34" height="34" viewBox="0 0 34 34"><path d="M11 11.2 L13.2 9.0 H20.7 L19.5 11.2 Z" fill="#5FD05F" stroke="#0A0A0A" stroke-width=".9" stroke-linejoin="round"/><rect x="11" y="11.2" width="8.5" height="4.8" rx="1" fill="url(#gbG)" stroke="#0A0A0A" stroke-width="1.1"/><rect x="11" y="16" width="8.5" height="4.8" rx="1" fill="url(#gbB)" stroke="#0A0A0A" stroke-width="1.1"/><rect x="11" y="20.8" width="8.5" height="4.8" rx="1" fill="url(#gbR)" stroke="#0A0A0A" stroke-width="1.1"/><path d="M3.8 13.6 L6.0 11.399999999999999 H15.599999999999998 L14.399999999999999 13.6 Z" fill="#5FD05F" stroke="#0A0A0A" stroke-width=".9" stroke-linejoin="round"/><rect x="3.8" y="13.6" width="10.6" height="4.8" rx="1" fill="url(#gbG)" stroke="#0A0A0A" stroke-width="1.1"/><rect x="3.8" y="18.4" width="10.6" height="4.8" rx="1" fill="url(#gbB)" stroke="#0A0A0A" stroke-width="1.1"/><rect x="3.8" y="23.2" width="10.6" height="4.8" rx="1" fill="url(#gbR)" stroke="#0A0A0A" stroke-width="1.1"/><path d="M18.8 7.6 L21.0 5.3999999999999995 H30.8 L29.6 7.6 Z" fill="#F4F07A" stroke="#0A0A0A" stroke-width=".9" stroke-linejoin="round"/><rect x="18.8" y="7.6" width="10.8" height="4.9" rx="1" fill="url(#gbY)" stroke="#0A0A0A" stroke-width="1.1"/><rect x="18.8" y="12.5" width="10.8" height="4.9" rx="1" fill="url(#gbG)" stroke="#0A0A0A" stroke-width="1.1"/><rect x="18.8" y="17.4" width="10.8" height="4.9" rx="1" fill="url(#gbB)" stroke="#0A0A0A" stroke-width="1.1"/><rect x="18.8" y="22.3" width="10.8" height="4.9" rx="1" fill="url(#gbR)" stroke="#0A0A0A" stroke-width="1.1"/></svg>
<svg class="a" style="left:901px;top:57px;font-family:'Liberation Sans',sans-serif" width="34" height="34" viewBox="0 0 34 34"><rect x="5.5" y="5.6" width="18" height="22.8" fill="#F8FBFF" stroke="#2E78D0" stroke-width="1.1"/><rect x="6" y="6.1" width="17" height="2.8" fill="#F59A28"/><path d="M9.5 12.5 H17 M9.5 15 H15.5 M9.5 17.5 H14 M9.5 20 H12.5" stroke="#2E78D0" stroke-width="1"/><path d="M11.7 24.6 L13.4 19.6 L16.8 22.8 Z" fill="#F0D060" stroke="#8A6A2A" stroke-width=".4"/><path d="M11.7 24.6 L12.3 22.8 L13.5 23.9 Z" fill="#222"/><path d="M13.4 19.6 L24.6 9.6 L27.8 13 L16.8 22.8 Z" fill="url(#gpen)" stroke="#1E7A14" stroke-width=".5"/><path d="M24.6 9.6 L26 8.3 L29.2 11.7 L27.8 13 Z" fill="#E8A020"/><path d="M26 8.3 Q27.8 6 29.8 7.8 Q31.6 9.8 29.2 11.7 Z" fill="#E83A1C"/></svg>
<svg class="a" style="left:936px;top:57px;font-family:'Liberation Sans',sans-serif" width="34" height="34" viewBox="0 0 34 34"><path d="M14.5 6 H18.5 L23.5 12.5 L18.5 19.5 H14.5 L19.5 12.5 Z" fill="#1F62D8"/><path d="M20.5 6 H24.2 L29 12.5 L24.2 19.5 H20.5 L25.2 12.5 Z" fill="#1F62D8"/><circle cx="12.9" cy="21.6" r="7" fill="url(#gdol)" stroke="#2F5A2C" stroke-width=".6"/><text x="9.5" y="25.8" font-size="12" font-weight="bold" fill="#fff">$</text></svg>
<svg class="a" style="left:971px;top:57px;font-family:'Liberation Sans',sans-serif" width="34" height="34" viewBox="0 0 34 34"><path d="M8.8 6.8 L25.5 4 L27 13 Q28.5 15 30.2 15.5 L14.5 22 Z" fill="#FBEB8A" stroke="#F0B830" stroke-width=".8"/><path d="M11.5 9.2 L24.5 7 M12.2 12.2 L25.2 10 M13 15.2 L26 13 M13.8 18.2 L24 16.2" stroke="#E6C040" stroke-width="1.3"/><circle cx="11.9" cy="23.4" r="7" fill="url(#gdol)" stroke="#2F5A2C" stroke-width=".6"/><text x="8.5" y="27.599999999999998" font-size="12" font-weight="bold" fill="#fff">$</text></svg>
<svg class="a" style="left:1006px;top:57px;font-family:'Liberation Sans',sans-serif" width="34" height="34" viewBox="0 0 34 34"><path d="M9 18 Q5.5 14 9.5 11.5 Q10.5 7 15.5 8.5 Q19.5 5.5 22.5 9.5 Q27.5 10 26.5 15 Q28 19.5 23 21.5 Q19 24 16 21.5 Q11.5 23 9 18 Z" fill="url(#gcloud)" stroke="#9A9A9A" stroke-width=".5"/><path d="M26.8 6.3 L13.6 14.6 L18.6 16.2 L6.6 26.6 L23.6 16 L18.8 14.2 Z" fill="#F6C81C" stroke="#B88A08" stroke-width=".6" stroke-linejoin="round"/><path d="M25 8 L15.5 14.4 L19.4 15.6" stroke="#FFE878" stroke-width=".8" fill="none"/></svg>
<svg class="a" style="left:1076px;top:57px;font-family:'Liberation Sans',sans-serif" width="34" height="34" viewBox="0 0 34 34"><rect x="4" y="8" width="26" height="16.6" fill="#000"/><text x="4.6" y="21" font-size="12.5" font-weight="bold" fill="#fff" textLength="24.6" lengthAdjust="spacingAndGlyphs">SAP</text></svg>
<svg class="a" style="left:1115px;top:57px;font-family:'Liberation Sans',sans-serif" width="34" height="34" viewBox="0 0 34 34"><rect x="6.3" y="6.3" width="21.4" height="21.4" rx="3" fill="url(#gexit)" stroke="#A8180C" stroke-width=".9"/><text x="7.6" y="21" font-size="9.8" fill="#fff" textLength="19" lengthAdjust="spacingAndGlyphs">EXIT</text></svg>
<div class="a" style="left:10px;top:118px;width:1139px;height:212px;border:1px solid #6382BF;border-right-color:#6E7F95;border-bottom-color:#6E7F95;background:#C8DDF2"></div><div class="a" style="left:12px;top:122px;width:1133px;height:204px;border:1px solid #A5A5A5;background:#fff;box-shadow:1px 1px 0 #fff"></div>
<svg class="a" style="left:0;top:0" width="1159" height="740"><path d="M13 118 V102.5 L18.5 97 H101 V118 Z" fill="#C44D2C"/><path d="M13.5 118 V102.7 L18.7 97.5 H101" fill="none" stroke="#fff" stroke-width="1"/><path d="M12.5 119 V102.3 L18.3 96.5 H101.5 V118" fill="none" stroke="#6382BF" stroke-width="1"/><path d="M102 118 V101.5 L107.5 97 H183 V118 Z" fill="#FD9A48"/><path d="M102.5 118 V102" fill="none" stroke="#fff" stroke-width="1" shape-rendering="crispEdges"/><path d="M108 97.5 H183" fill="none" stroke="#FFE9D6" stroke-width="1" shape-rendering="crispEdges" opacity=".85"/><path d="M102.3 101.7 L107.5 96.5 H183.5 V118" fill="none" stroke="#7A8A99" stroke-width="1"/><path d="M184 118 V101.5 L189.5 97 H259 V118 Z" fill="#FD9A48"/><path d="M184.5 118 V102" fill="none" stroke="#fff" stroke-width="1" shape-rendering="crispEdges"/><path d="M190 97.5 H259" fill="none" stroke="#FFE9D6" stroke-width="1" shape-rendering="crispEdges" opacity=".85"/><path d="M184.3 101.7 L189.5 96.5 H259.5 V118" fill="none" stroke="#7A8A99" stroke-width="1"/><path d="M260 118 V101.5 L265.5 97 H316 V118 Z" fill="#FD9A48"/><path d="M260.5 118 V102" fill="none" stroke="#fff" stroke-width="1" shape-rendering="crispEdges"/><path d="M266 97.5 H316" fill="none" stroke="#FFE9D6" stroke-width="1" shape-rendering="crispEdges" opacity=".85"/><path d="M260.3 101.7 L265.5 96.5 H316.5 V118" fill="none" stroke="#7A8A99" stroke-width="1"/><path d="M317 118 V101.5 L322.5 97 H376 V118 Z" fill="#FD9A48"/><path d="M317.5 118 V102" fill="none" stroke="#fff" stroke-width="1" shape-rendering="crispEdges"/><path d="M323 97.5 H376" fill="none" stroke="#FFE9D6" stroke-width="1" shape-rendering="crispEdges" opacity=".85"/><path d="M317.3 101.7 L322.5 96.5 H376.5 V118" fill="none" stroke="#7A8A99" stroke-width="1"/><path d="M377 118 V101.5 L382.5 97 H462 V118 Z" fill="#FD9A48"/><path d="M377.5 118 V102" fill="none" stroke="#fff" stroke-width="1" shape-rendering="crispEdges"/><path d="M383 97.5 H462" fill="none" stroke="#FFE9D6" stroke-width="1" shape-rendering="crispEdges" opacity=".85"/><path d="M377.3 101.7 L382.5 96.5 H462.5 V118" fill="none" stroke="#7A8A99" stroke-width="1"/><path d="M463 118 V101.5 L468.5 97 H538 V118 Z" fill="#FD9A48"/><path d="M463.5 118 V102" fill="none" stroke="#fff" stroke-width="1" shape-rendering="crispEdges"/><path d="M469 97.5 H538" fill="none" stroke="#FFE9D6" stroke-width="1" shape-rendering="crispEdges" opacity=".85"/><path d="M463.3 101.7 L468.5 96.5 H538.5 V118" fill="none" stroke="#7A8A99" stroke-width="1"/><path d="M539 118 V101.5 L544.5 97 H602 V118 Z" fill="#FD9A48"/><path d="M539.5 118 V102" fill="none" stroke="#fff" stroke-width="1" shape-rendering="crispEdges"/><path d="M545 97.5 H602" fill="none" stroke="#FFE9D6" stroke-width="1" shape-rendering="crispEdges" opacity=".85"/><path d="M539.3 101.7 L544.5 96.5 H602.5 V118" fill="none" stroke="#7A8A99" stroke-width="1"/><path d="M603 118 V101.5 L608.5 97 H677 V118 Z" fill="#FD9A48"/><path d="M603.5 118 V102" fill="none" stroke="#fff" stroke-width="1" shape-rendering="crispEdges"/><path d="M609 97.5 H677" fill="none" stroke="#FFE9D6" stroke-width="1" shape-rendering="crispEdges" opacity=".85"/><path d="M603.3 101.7 L608.5 96.5 H677.5 V118" fill="none" stroke="#7A8A99" stroke-width="1"/><path d="M678 118 V101.5 L683.5 97 H743 V118 Z" fill="#FD9A48"/><path d="M678.5 118 V102" fill="none" stroke="#fff" stroke-width="1" shape-rendering="crispEdges"/><path d="M684 97.5 H743" fill="none" stroke="#FFE9D6" stroke-width="1" shape-rendering="crispEdges" opacity=".85"/><path d="M678.3 101.7 L683.5 96.5 H743.5 V118" fill="none" stroke="#7A8A99" stroke-width="1"/><path d="M744 118 V101.5 L749.5 97 H796 V118 Z" fill="#FD9A48"/><path d="M744.5 118 V102" fill="none" stroke="#fff" stroke-width="1" shape-rendering="crispEdges"/><path d="M750 97.5 H796" fill="none" stroke="#FFE9D6" stroke-width="1" shape-rendering="crispEdges" opacity=".85"/><path d="M744.3 101.7 L749.5 96.5 H796.5 V118" fill="none" stroke="#7A8A99" stroke-width="1"/><path d="M797 118 V101.5 L802.5 97 H875 V118 Z" fill="#FD9A48"/><path d="M797.5 118 V102" fill="none" stroke="#fff" stroke-width="1" shape-rendering="crispEdges"/><path d="M803 97.5 H875" fill="none" stroke="#FFE9D6" stroke-width="1" shape-rendering="crispEdges" opacity=".85"/><path d="M797.3 101.7 L802.5 96.5 H875.5 V118" fill="none" stroke="#7A8A99" stroke-width="1"/><path d="M876 118 V101.5 L881.5 97 H981 V118 Z" fill="#FD9A48"/><path d="M876.5 118 V102" fill="none" stroke="#fff" stroke-width="1" shape-rendering="crispEdges"/><path d="M882 97.5 H981" fill="none" stroke="#FFE9D6" stroke-width="1" shape-rendering="crispEdges" opacity=".85"/><path d="M876.3 101.7 L881.5 96.5 H981.5 V118" fill="none" stroke="#7A8A99" stroke-width="1"/><path d="M982 118 V101.5 L987.5 97 H1032 V118 Z" fill="#FD9A48"/><path d="M982.5 118 V102" fill="none" stroke="#fff" stroke-width="1" shape-rendering="crispEdges"/><path d="M988 97.5 H1032" fill="none" stroke="#FFE9D6" stroke-width="1" shape-rendering="crispEdges" opacity=".85"/><path d="M982.3 101.7 L987.5 96.5 H1032.5 V118" fill="none" stroke="#7A8A99" stroke-width="1"/></svg>
<div class="a" style="left:13px;top:118px;width:89px;height:1px;background:#C8DDF2"></div>
<div class="a" style="left:102px;top:119px;width:1046px;height:1px;background:#fff"></div>
<div class="l b" style="left:16.8px;top:101px;color:#fff;letter-spacing:-.2px;font-size:12.2px">Information</div>
<div class="l" style="left:107.5px;top:101px;color:#000;letter-spacing:0.12px">Customer</div>
<div class="l" style="left:189.5px;top:101px;color:#000;letter-spacing:0px">Contacts</div>
<div class="l" style="left:265.5px;top:101px;color:#000;letter-spacing:-0.24px">Event</div>
<div class="l" style="left:322.5px;top:101px;color:#000;letter-spacing:0.08px">Dates</div>
<div class="l" style="left:382.5px;top:101px;color:#000;letter-spacing:0.08px">Schedules</div>
<div class="l" style="left:468.5px;top:101px;color:#000;letter-spacing:0px">Shipping</div>
<div class="l" style="left:544.5px;top:101px;color:#000;letter-spacing:-0.13px">Return</div>
<div class="l" style="left:608.5px;top:101px;color:#000;letter-spacing:-0.11px">Payment</div>
<div class="l" style="left:683.5px;top:101px;color:#000;letter-spacing:0px">Default</div>
<div class="l" style="left:749.5px;top:101px;color:#000;letter-spacing:0.27px">Cost</div>
<div class="l" style="left:802.5px;top:101px;color:#000;letter-spacing:0px">Sub Total</div>
<div class="l" style="left:881.5px;top:101px;color:#000;letter-spacing:0px">Flat Discounts</div>
<div class="l" style="left:987.5px;top:101px;color:#000;letter-spacing:-0.37px">UDF</div>
<div class="l " style="left:17px;top:133px;">Number</div>
<div class="l " style="left:17px;top:160px;">Description</div>
<div class="l " style="left:17px;top:187px;">Date Created</div>
<div class="l " style="left:17px;top:214px;">Site</div>
<div class="l " style="left:17px;top:238.6px;">Project Mgr.</div>
<div class="l " style="left:17px;top:265.6px;">Sales Person</div>
<div class="l " style="left:17px;top:292.6px;">Labor Planner</div>
<div class="f " style="left:99px;top:128px;width:100px;height:24px;">ORD#113</div>
<div class="l " style="left:212px;top:133px;">Version</div>
<div class="f " style="left:264px;top:128px;width:88px;height:24px;">1</div>
<svg class="a" style="left:331.7px;top:128.8px" width="20" height="20" viewBox="0 0 20 20"><defs><radialGradient id="lg1" cx=".38" cy=".32" r=".75"><stop offset="0" stop-color="#fff"/><stop offset=".5" stop-color="#DDF1FF"/><stop offset="1" stop-color="#A4D4F6"/></radialGradient></defs><path d="M10 10 L15.6 14.8" stroke="#5E5248" stroke-width="3.3" stroke-linecap="round"/><path d="M10.6 10.5 L15.5 14.7" stroke="#F4A43C" stroke-width="1.9" stroke-linecap="round"/><circle cx="6.5" cy="6.5" r="4.8" fill="url(#lg1)" stroke="#8595A8" stroke-width="1.5"/></svg>
<div class="f w" style="left:99px;top:155px;width:255px;height:24px;"></div>
<div class="f " style="left:99px;top:182px;width:100px;height:24px;">02/05/2018</div>
<div class="l " style="left:217px;top:187px;">Project</div>
<div class="f w" style="left:264px;top:182px;width:88px;height:24px;">ORD#113</div>
<svg class="a" style="left:331.7px;top:182.8px" width="20" height="20" viewBox="0 0 20 20"><defs><radialGradient id="lg2" cx=".38" cy=".32" r=".75"><stop offset="0" stop-color="#fff"/><stop offset=".5" stop-color="#DDF1FF"/><stop offset="1" stop-color="#A4D4F6"/></radialGradient></defs><path d="M10 10 L15.6 14.8" stroke="#5E5248" stroke-width="3.3" stroke-linecap="round"/><path d="M10.6 10.5 L15.5 14.7" stroke="#F4A43C" stroke-width="1.9" stroke-linecap="round"/><circle cx="6.5" cy="6.5" r="4.8" fill="url(#lg2)" stroke="#8595A8" stroke-width="1.5"/></svg>
<div class="f " style="left:99px;top:209px;width:126px;height:24px;">Rydges Lakeside Can</div>
<svg class="a" style="left:205.4px;top:209.4px" width="20" height="20" viewBox="0 0 20 20"><defs><radialGradient id="lg3" cx=".38" cy=".32" r=".75"><stop offset="0" stop-color="#fff"/><stop offset=".5" stop-color="#DDF1FF"/><stop offset="1" stop-color="#A4D4F6"/></radialGradient></defs><path d="M10 10 L15.6 14.8" stroke="#5E5248" stroke-width="3.3" stroke-linecap="round"/><path d="M10.6 10.5 L15.5 14.7" stroke="#F4A43C" stroke-width="1.9" stroke-linecap="round"/><circle cx="6.5" cy="6.5" r="4.8" fill="url(#lg3)" stroke="#8595A8" stroke-width="1.5"/></svg>
<div class="l " style="left:233px;top:214px;">Sub Orders</div>
<div class="f " style="left:304px;top:209px;width:50px;height:24px;">0</div>
<div class="f c" style="left:99px;top:236px;width:107px;height:24px;"></div>
<svg class="a" style="left:187.8px;top:238.2px" width="20" height="20" viewBox="0 0 20 20"><defs><radialGradient id="lg4" cx=".38" cy=".32" r=".75"><stop offset="0" stop-color="#fff"/><stop offset=".5" stop-color="#DDF1FF"/><stop offset="1" stop-color="#A4D4F6"/></radialGradient></defs><path d="M10 10 L15.6 14.8" stroke="#5E5248" stroke-width="3.3" stroke-linecap="round"/><path d="M10.6 10.5 L15.5 14.7" stroke="#F4A43C" stroke-width="1.9" stroke-linecap="round"/><circle cx="6.5" cy="6.5" r="4.8" fill="url(#lg4)" stroke="#8595A8" stroke-width="1.5"/></svg>
<div class="ab" style="left:205px;top:236px;width:20px;height:24px"></div>
<div class="l " style="left:232px;top:239.3px;">Probability</div>
<div class="f c" style="left:304px;top:236px;width:31px;height:24px;padding-left:3px;padding-top:4.5px;font-size:12px;letter-spacing:-.3px">0%</div>
<div class="ab" style="left:334px;top:236px;width:20px;height:24px"></div>
<div class="f c" style="left:99px;top:263px;width:236px;height:24px;padding-left:2.5px;font-size:12px;padding-top:4px;letter-spacing:-.26px">Mantra M Mantra</div>
<svg class="a" style="left:316.0px;top:264.5px" width="20" height="20" viewBox="0 0 20 20"><defs><radialGradient id="lg5" cx=".38" cy=".32" r=".75"><stop offset="0" stop-color="#fff"/><stop offset=".5" stop-color="#DDF1FF"/><stop offset="1" stop-color="#A4D4F6"/></radialGradient></defs><path d="M10 10 L15.6 14.8" stroke="#5E5248" stroke-width="3.3" stroke-linecap="round"/><path d="M10.6 10.5 L15.5 14.7" stroke="#F4A43C" stroke-width="1.9" stroke-linecap="round"/><circle cx="6.5" cy="6.5" r="4.8" fill="url(#lg5)" stroke="#8595A8" stroke-width="1.5"/></svg>
<div class="ab" style="left:334px;top:263px;width:20px;height:24px"></div>
<div class="f w" style="left:99px;top:290px;width:255px;height:24px;"></div>
<svg class="a" style="left:333.5px;top:291.0px" width="20" height="20" viewBox="0 0 20 20"><defs><radialGradient id="lg6" cx=".38" cy=".32" r=".75"><stop offset="0" stop-color="#fff"/><stop offset=".5" stop-color="#DDF1FF"/><stop offset="1" stop-color="#A4D4F6"/></radialGradient></defs><path d="M10 10 L15.6 14.8" stroke="#5E5248" stroke-width="3.3" stroke-linecap="round"/><path d="M10.6 10.5 L15.5 14.7" stroke="#F4A43C" stroke-width="1.9" stroke-linecap="round"/><circle cx="6.5" cy="6.5" r="4.8" fill="url(#lg6)" stroke="#8595A8" stroke-width="1.5"/></svg>
<div class="a" style="left:366px;top:131px;width:215px;height:97px;border:1px solid #B4B4B4"></div>
<div class="a" style="left:371px;top:126px;width:96px;height:12px;background:#fff"></div>
<div class="l b" style="left:373px;top:126.19999999999999px;color:#1E1E1E;letter-spacing:-.25px;font-size:12px">Charge Duration</div>
<div class="l " style="left:369.5px;top:144px;letter-spacing:-.22px">Start Date/Time</div>
<div class="f " style="left:458px;top:141px;width:120px;height:24px;padding-top:5px">02/05/2018</div>
<div class="l " style="left:369.5px;top:173px;letter-spacing:-.22px">End Date/Time</div>
<div class="f " style="left:458px;top:170px;width:120px;height:24px;padding-top:5px">03/05/2018</div>
<div class="l " style="left:369.5px;top:202px;">Duration</div>
<div class="f " style="left:458px;top:199px;width:85px;height:24px;padding-top:5px">1d</div>
<div class="l " style="left:588.5px;top:141px;">Conv. Date</div>
<div class="f " style="left:655px;top:136px;width:89px;height:24px;"></div>
<div class="cb k" style="left:589px;top:175px"></div>
<div class="l " style="left:606px;top:174.5px;letter-spacing:0">Show Suggestions</div>
<div class="cb " style="left:589px;top:195px"></div>
<div class="l " style="left:606px;top:194.5px;letter-spacing:-.22px">Event Pricing</div>
<div class="cb " style="left:589px;top:215px"></div>
<div class="l " style="left:606px;top:214.5px;letter-spacing:-.24px">Day-Week-Month Pricing</div>
<div class="l " style="left:362.5px;top:241px;">Customer</div>
<div class="f " style="left:421px;top:236px;width:160px;height:24px;padding-top:5px;letter-spacing:-.15px">Cross Country Finance</div>
<svg class="a" style="left:560.2px;top:236.8px" width="20" height="20" viewBox="0 0 20 20"><defs><radialGradient id="lg7" cx=".38" cy=".32" r=".75"><stop offset="0" stop-color="#fff"/><stop offset=".5" stop-color="#DDF1FF"/><stop offset="1" stop-color="#A4D4F6"/></radialGradient></defs><path d="M10 10 L15.6 14.8" stroke="#5E5248" stroke-width="3.3" stroke-linecap="round"/><path d="M10.6 10.5 L15.5 14.7" stroke="#F4A43C" stroke-width="1.9" stroke-linecap="round"/><circle cx="6.5" cy="6.5" r="4.8" fill="url(#lg7)" stroke="#8595A8" stroke-width="1.5"/></svg>
<div class="l " style="left:362.5px;top:270px;">Contact</div>
<div class="f " style="left:421px;top:265px;width:160px;height:24px;padding-top:5px">Accounts Payable</div>
<svg class="a" style="left:560.2px;top:265.8px" width="20" height="20" viewBox="0 0 20 20"><defs><radialGradient id="lg8" cx=".38" cy=".32" r=".75"><stop offset="0" stop-color="#fff"/><stop offset=".5" stop-color="#DDF1FF"/><stop offset="1" stop-color="#A4D4F6"/></radialGradient></defs><path d="M10 10 L15.6 14.8" stroke="#5E5248" stroke-width="3.3" stroke-linecap="round"/><path d="M10.6 10.5 L15.5 14.7" stroke="#F4A43C" stroke-width="1.9" stroke-linecap="round"/><circle cx="6.5" cy="6.5" r="4.8" fill="url(#lg8)" stroke="#8595A8" stroke-width="1.5"/></svg>
<div class="l " style="left:362.5px;top:299px;">Contact Tel #</div>
<div class="f " style="left:451px;top:294px;width:130px;height:24px;"></div>
<div class="l " style="left:587px;top:241px;">Bill To</div>
<div class="f " style="left:654px;top:236px;width:160px;height:24px;padding-top:5px">MB#1</div>
<svg class="a" style="left:793.2px;top:236.8px" width="20" height="20" viewBox="0 0 20 20"><defs><radialGradient id="lg9" cx=".38" cy=".32" r=".75"><stop offset="0" stop-color="#fff"/><stop offset=".5" stop-color="#DDF1FF"/><stop offset="1" stop-color="#A4D4F6"/></radialGradient></defs><path d="M10 10 L15.6 14.8" stroke="#5E5248" stroke-width="3.3" stroke-linecap="round"/><path d="M10.6 10.5 L15.5 14.7" stroke="#F4A43C" stroke-width="1.9" stroke-linecap="round"/><circle cx="6.5" cy="6.5" r="4.8" fill="url(#lg9)" stroke="#8595A8" stroke-width="1.5"/></svg>
<div class="l " style="left:587px;top:270px;">Bill Contact</div>
<div class="f " style="left:654px;top:265px;width:160px;height:24px;padding-top:5px;letter-spacing:-.35px">SHEETAL INGALE</div>
<svg class="a" style="left:793.2px;top:265.8px" width="20" height="20" viewBox="0 0 20 20"><defs><radialGradient id="lg10" cx=".38" cy=".32" r=".75"><stop offset="0" stop-color="#fff"/><stop offset=".5" stop-color="#DDF1FF"/><stop offset="1" stop-color="#A4D4F6"/></radialGradient></defs><path d="M10 10 L15.6 14.8" stroke="#5E5248" stroke-width="3.3" stroke-linecap="round"/><path d="M10.6 10.5 L15.5 14.7" stroke="#F4A43C" stroke-width="1.9" stroke-linecap="round"/><circle cx="6.5" cy="6.5" r="4.8" fill="url(#lg10)" stroke="#8595A8" stroke-width="1.5"/></svg>
<div class="l " style="left:587px;top:299px;">Language</div>
<div class="f " style="left:654px;top:294px;width:90px;height:24px;"></div>
<svg class="a" style="left:724.0px;top:294.8px" width="20" height="20" viewBox="0 0 20 20"><defs><radialGradient id="lg11" cx=".38" cy=".32" r=".75"><stop offset="0" stop-color="#fff"/><stop offset=".5" stop-color="#DDF1FF"/><stop offset="1" stop-color="#A4D4F6"/></radialGradient></defs><path d="M10 10 L15.6 14.8" stroke="#5E5248" stroke-width="3.3" stroke-linecap="round"/><path d="M10.6 10.5 L15.5 14.7" stroke="#F4A43C" stroke-width="1.9" stroke-linecap="round"/><circle cx="6.5" cy="6.5" r="4.8" fill="url(#lg11)" stroke="#8595A8" stroke-width="1.5"/></svg>
<div class="a" style="left:752px;top:148px;width:290px;height:83px;border:1px solid #6382BF;border-right-color:#6E7F95;border-bottom-color:#6E7F95;background:#C8DDF2"></div><div class="a" style="left:754px;top:152px;width:284px;height:75px;border:1px solid #A5A5A5;background:#fff;box-shadow:1px 1px 0 #fff"></div>
<svg class="a" style="left:0;top:0" width="1159" height="740"><path d="M755 148 V132.5 L760.5 127 H843 V148 Z" fill="#C44D2C"/><path d="M755.5 148 V132.7 L760.7 127.5 H843" fill="none" stroke="#fff" stroke-width="1"/><path d="M754.5 149 V132.3 L760.3 126.5 H843.5 V148" fill="none" stroke="#6382BF" stroke-width="1"/><path d="M844 148 V131.5 L849.5 127 H963 V148 Z" fill="#FD9A48"/><path d="M844.5 148 V132" fill="none" stroke="#fff" stroke-width="1" shape-rendering="crispEdges"/><path d="M850 127.5 H963" fill="none" stroke="#FFE9D6" stroke-width="1" shape-rendering="crispEdges" opacity=".85"/><path d="M844.3 131.7 L849.5 126.5 H963.5 V148" fill="none" stroke="#7A8A99" stroke-width="1"/></svg>
<div class="a" style="left:755px;top:148px;width:89px;height:1px;background:#C8DDF2"></div>
<div class="a" style="left:844px;top:149px;width:197px;height:1px;background:#fff"></div>
<div class="l b" style="left:759.5px;top:131px;color:#fff;letter-spacing:-.3px;font-size:12.2px">Comments</div>
<div class="l" style="left:849.5px;top:131px;color:#000;letter-spacing:.12px">LaborComments</div>
<div class="a" style="left:761px;top:154px;width:270px;height:69px;background:#EEE;border:2px solid #6F7C8A;border-bottom-width:1px;border-right-color:#7C8895;border-bottom-color:#8A949E"></div>
<svg class="a" style="left:1010.0px;top:156.1px" width="20" height="20" viewBox="0 0 20 20"><defs><radialGradient id="lg12" cx=".38" cy=".32" r=".75"><stop offset="0" stop-color="#fff"/><stop offset=".5" stop-color="#DDF1FF"/><stop offset="1" stop-color="#A4D4F6"/></radialGradient></defs><path d="M10 10 L15.6 14.8" stroke="#5E5248" stroke-width="3.3" stroke-linecap="round"/><path d="M10.6 10.5 L15.5 14.7" stroke="#F4A43C" stroke-width="1.9" stroke-linecap="round"/><circle cx="6.5" cy="6.5" r="4.8" fill="url(#lg12)" stroke="#8595A8" stroke-width="1.5"/></svg>
<div class="l " style="left:826px;top:248px;">Document Folder:</div>
<div class="a" style="left:1009px;top:239px;width:49px;height:23px;border:1px solid #ABABAB;background:#fff"></div>
<div class="a" style="left:1019px;top:241px;width:30px;height:20px;border:1px solid #5E5654;border-radius:2.5px;background:#fff;font-size:10.6px;line-height:18px;text-align:center;color:#000;letter-spacing:-.2px;overflow:hidden;-webkit-text-stroke:.25px #000">Reset</div>
<div class="a" style="left:826px;top:264px;width:216px;height:48px;background:#EEE;border:2px solid #6F7C8A;border-bottom-width:1px;border-right-color:#7C8895;border-bottom-color:#8A949E"></div>
<div class="a" style="left:8px;top:330px;width:1142px;height:1px;background:#D6D6D6"></div>
<div class="a" style="left:8px;top:93px;width:1px;height:238px;background:#D6D6D6"></div>
<div class="a" style="left:8px;top:356px;width:1143px;height:315px;border:1px solid #6F8AC0;border-right-color:#6E7F95;border-bottom-color:#6E7F95;background:#C8DDF2"></div><div class="a" style="left:10px;top:360px;width:1137px;height:307px;border:1px solid #A5A5A5;background:#fff;box-shadow:1px 1px 0 #fff"></div>
<svg class="a" style="left:0;top:0" width="1159" height="740"><path d="M11 356 V340.5 L16.5 335 H76 V356 Z" fill="#C44D2C"/><path d="M11.5 356 V340.7 L16.7 335.5 H76" fill="none" stroke="#fff" stroke-width="1"/><path d="M10.5 357 V340.3 L16.3 334.5 H76.5 V356" fill="none" stroke="#6382BF" stroke-width="1"/><path d="M77 356 V339.5 L82.5 335 H134 V356 Z" fill="#FD9A48"/><path d="M77.5 356 V340" fill="none" stroke="#fff" stroke-width="1" shape-rendering="crispEdges"/><path d="M83 335.5 H134" fill="none" stroke="#FFE9D6" stroke-width="1" shape-rendering="crispEdges" opacity=".85"/><path d="M77.3 339.7 L82.5 334.5 H134.5 V356" fill="none" stroke="#7A8A99" stroke-width="1"/></svg>
<div class="a" style="left:11px;top:356px;width:66px;height:1px;background:#C8DDF2"></div>
<div class="a" style="left:77px;top:357px;width:1073px;height:1px;background:#fff"></div>
<div class="l b" style="left:15.5px;top:339px;color:#fff;letter-spacing:-.35px">Item(s)</div>
<div class="l" style="left:82.5px;top:339px;color:#000;letter-spacing:-.1px">Labor</div>
<div class="a" style="left:12px;top:362px;width:1133px;height:303px;border:1px solid #71849C;border-right-color:#8FA2BA;background:#fff"></div>
<div class="a" style="left:13px;top:363px;width:1131px;height:20px;overflow:hidden" id="hdr"><div class="a" style="left:0;top:0;width:1140px;height:20px;background:#FF6E38"></div>
<div class="a" style="left:0px;top:0;width:14px;height:19px;background:#C44D2C;border:1px solid #9C3A1C;box-shadow:inset 1px 1px 0 #F56A36;color:#fff;text-align:center;line-height:14px;padding-top:2.5px;white-space:nowrap;overflow:hidden;letter-spacing:0">T</div>
<div class="a" style="left:15px;top:0;width:14px;height:19px;background:#C44D2C;border:1px solid #9C3A1C;box-shadow:inset 1px 1px 0 #F56A36;color:#fff;text-align:center;line-height:14px;padding-top:2.5px;white-space:nowrap;overflow:hidden;letter-spacing:0">C</div>
<div class="a" style="left:30px;top:0;width:14px;height:19px;background:#C44D2C;border:1px solid #9C3A1C;box-shadow:inset 1px 1px 0 #F56A36;color:#fff;text-align:center;line-height:14px;padding-top:2.5px;white-space:nowrap;overflow:hidden;letter-spacing:0">S</div>
<div class="a" style="left:45px;top:0;width:24px;height:19px;background:#C44D2C;border:1px solid #9C3A1C;box-shadow:inset 1px 1px 0 #F56A36;color:#fff;text-align:center;line-height:14px;padding-top:2.5px;white-space:nowrap;overflow:hidden;letter-spacing:-.3px">I.C</div>
<div class="a" style="left:70px;top:0;width:24px;height:19px;background:#C44D2C;border:1px solid #9C3A1C;box-shadow:inset 1px 1px 0 #F56A36;color:#fff;text-align:center;line-height:14px;padding-top:2.5px;white-space:nowrap;overflow:hidden;letter-spacing:-.3px">I.W</div>
<div class="a" style="left:95px;top:0;width:24px;height:19px;background:#C44D2C;border:1px solid #9C3A1C;box-shadow:inset 1px 1px 0 #F56A36;color:#fff;text-align:center;line-height:14px;padding-top:2.5px;white-space:nowrap;overflow:hidden;letter-spacing:-.3px">I.I</div>
<div class="a" style="left:120px;top:0;width:14px;height:19px;background:#C44D2C;border:1px solid #9C3A1C;box-shadow:inset 1px 1px 0 #F56A36;color:#fff;text-align:center;line-height:14px;padding-top:2.5px;white-space:nowrap;overflow:hidden;letter-spacing:0">X</div>
<div class="a" style="left:135px;top:0;width:19px;height:19px;background:#C44D2C;border:1px solid #9C3A1C;box-shadow:inset 1px 1px 0 #F56A36;color:#fff;text-align:center;line-height:14px;padding-top:2.5px;white-space:nowrap;overflow:hidden;letter-spacing:0">L</div>
<div class="a" style="left:155px;top:0;width:44px;height:19px;background:#C44D2C;border:1px solid #9C3A1C;box-shadow:inset 1px 1px 0 #F56A36;color:#fff;text-align:center;line-height:14px;padding-top:2.5px;white-space:nowrap;overflow:hidden;letter-spacing:-.3px">Action</div>
<div class="a" style="left:200px;top:0;width:99px;height:19px;background:#C44D2C;border:1px solid #9C3A1C;box-shadow:inset 1px 1px 0 #F56A36;color:#fff;text-align:center;line-height:14px;padding-top:2.5px;white-space:nowrap;overflow:hidden;letter-spacing:-.3px">Product ID</div>
<div class="a" style="left:300px;top:0;width:309px;height:19px;background:#C44D2C;border:1px solid #9C3A1C;box-shadow:inset 1px 1px 0 #F56A36;color:#fff;text-align:center;line-height:14px;padding-top:2.5px;white-space:nowrap;overflow:hidden;letter-spacing:-.3px">Description</div>
<div class="a" style="left:610px;top:0;width:54px;height:19px;background:#C44D2C;border:1px solid #9C3A1C;box-shadow:inset 1px 1px 0 #F56A36;color:#fff;text-align:center;line-height:14px;padding-top:2.5px;white-space:nowrap;overflow:hidden;letter-spacing:-.3px">Duration</div>
<div class="a" style="left:665px;top:0;width:29px;height:19px;background:#C44D2C;border:1px solid #9C3A1C;box-shadow:inset 1px 1px 0 #F56A36;color:#fff;text-align:center;line-height:14px;padding-top:2.5px;white-space:nowrap;overflow:hidden;letter-spacing:-.3px">DIW</div>
<div class="a" style="left:695px;top:0;width:39px;height:19px;background:#C44D2C;border:1px solid #9C3A1C;box-shadow:inset 1px 1px 0 #F56A36;color:#fff;text-align:center;line-height:14px;padding-top:2.5px;white-space:nowrap;overflow:hidden;letter-spacing:-.3px">DIM</div>
<div class="a" style="left:735px;top:0;width:29px;height:19px;background:#C44D2C;border:1px solid #9C3A1C;box-shadow:inset 1px 1px 0 #F56A36;color:#fff;text-align:center;line-height:14px;padding-top:2.5px;white-space:nowrap;overflow:hidden;letter-spacing:-.3px">Qty</div>
<div class="a" style="left:765px;top:0;width:39px;height:19px;background:#C44D2C;border:1px solid #9C3A1C;box-shadow:inset 1px 1px 0 #F56A36;color:#fff;text-align:center;line-height:14px;padding-top:2.5px;white-space:nowrap;overflow:hidden;letter-spacing:-.3px">Unit</div>
<div class="a" style="left:805px;top:0;width:65px;height:19px;background:#C44D2C;border:1px solid #9C3A1C;box-shadow:inset 1px 1px 0 #F56A36;color:#fff;text-align:center;line-height:14px;padding-top:2.5px;white-space:nowrap;overflow:hidden;letter-spacing:-.3px">Unit Price</div>
<div class="a" style="left:871px;top:0;width:58px;height:19px;background:#C44D2C;border:1px solid #9C3A1C;box-shadow:inset 1px 1px 0 #F56A36;color:#fff;text-align:center;line-height:14px;padding-top:2.5px;white-space:nowrap;overflow:hidden;letter-spacing:-.3px">Discount</div>
<div class="a" style="left:930px;top:0;width:67px;height:19px;background:#C44D2C;border:1px solid #9C3A1C;box-shadow:inset 1px 1px 0 #F56A36;color:#fff;text-align:center;line-height:14px;padding-top:2.5px;white-space:nowrap;overflow:hidden;letter-spacing:-.3px">Net Each</div>
<div class="a" style="left:998px;top:0;width:64px;height:19px;background:#C44D2C;border:1px solid #9C3A1C;box-shadow:inset 1px 1px 0 #F56A36;color:#fff;text-align:center;line-height:14px;padding-top:2.5px;white-space:nowrap;overflow:hidden;letter-spacing:-.3px">Net Disc</div>
<div class="a" style="left:1063px;top:0;width:74px;height:19px;background:#C44D2C;border:1px solid #9C3A1C;box-shadow:inset 1px 1px 0 #F56A36;color:#fff;text-align:center;line-height:14px;padding-top:2.5px;white-space:nowrap;overflow:hidden;letter-spacing:-.3px">Amount</div>
</div>
<div class="a" style="left:13px;top:401px;width:1131px;height:1px;background:#B76A30"></div>
<div class="cb k" style="left:14px;top:386px"></div>
<div class="cb" style="left:29px;top:386px"></div>
<div class="cb" style="left:44px;top:386px"></div>
<div class="cb" style="left:64px;top:386px"></div>
<div class="cb" style="left:89px;top:386px"></div>
<div class="cb" style="left:114px;top:386px"></div>
<div class="cb" style="left:134px;top:386px"></div>
<div class="cb" style="left:151px;top:386px"></div>
<div class="td " style="left:170px;top:385.7px;left:169.5px">Rent</div>
<div class="td " style="left:215px;top:385.7px;left:214.5px;font-size:12px;letter-spacing:-.3px">S-KIT</div>
<div class="td" style="left:321px;top:385.7px">-</div>
<div class="td b" style="left:331px;top:385.7px;font-size:12.3px;letter-spacing:0;transform:scaleX(.89);transform-origin:0 0">S-KIT</div>
<div class="td " style="left:625px;top:385.7px;left:625px">1d</div>
<div class="td r" style="left:678px;top:385.9px;width:27px;font-size:12px;letter-spacing:0;">5.00</div>
<div class="td r" style="left:708px;top:385.9px;width:37px;font-size:12px;letter-spacing:0;">20.00</div>
<div class="td r" style="left:748px;top:385.9px;width:27px;font-size:12px;letter-spacing:0;">1</div>
<div class="td " style="left:780px;top:385.7px;left:779.5px">Day</div>
<div class="td r" style="left:818px;top:385.9px;width:63px;font-size:12px;letter-spacing:0;">0.00</div>
<div class="td r" style="left:884px;top:385.9px;width:56px;font-size:12px;letter-spacing:0;">0.00</div>
<div class="td r" style="left:943px;top:385.9px;width:65px;font-size:12px;letter-spacing:0;">0.00</div>
<div class="td r" style="left:1011px;top:385.9px;width:62px;font-size:12px;letter-spacing:0;">0.00</div>
<div class="td" style="left:1125px;top:385.9px;width:19px;overflow:hidden;font-size:12px;letter-spacing:0">0.00</div>
<div class="a" style="left:13px;top:420px;width:1131px;height:1px;background:#B76A30"></div>
<div class="cb k" style="left:14px;top:405px"></div>
<div class="cb" style="left:29px;top:405px"></div>
<div class="cb" style="left:44px;top:405px"></div>
<div class="cb" style="left:64px;top:405px"></div>
<div class="cb" style="left:89px;top:405px"></div>
<div class="cb" style="left:114px;top:405px"></div>
<div class="cb" style="left:134px;top:405px"></div>
<div class="cb" style="left:151px;top:405px"></div>
<div class="td " style="left:170px;top:404.7px;left:169.5px">Rent</div>
<div class="td " style="left:215px;top:404.7px;left:214.5px;font-size:12px;letter-spacing:.15px">10003638</div>
<div class="td i" style="left:326.5px;top:404.7px;letter-spacing:-0.13px">Dress Kit 8x6' Screen Technics Black</div>
<div class="td r" style="left:748px;top:404.9px;width:27px;font-size:12px;letter-spacing:0;">1</div>
<div class="td r" style="left:943px;top:404.9px;width:65px;font-size:12px;letter-spacing:0;">0.00</div>
<div class="td r" style="left:1011px;top:404.9px;width:62px;font-size:12px;letter-spacing:0;">0.00</div>
<div class="a" style="left:13px;top:439px;width:1131px;height:1px;background:#B76A30"></div>
<div class="cb k" style="left:14px;top:424px"></div>
<div class="cb" style="left:29px;top:424px"></div>
<div class="cb" style="left:44px;top:424px"></div>
<div class="cb" style="left:64px;top:424px"></div>
<div class="cb" style="left:89px;top:424px"></div>
<div class="cb" style="left:114px;top:424px"></div>
<div class="cb" style="left:134px;top:424px"></div>
<div class="cb" style="left:151px;top:424px"></div>
<div class="td " style="left:170px;top:423.7px;left:169.5px">Rent</div>
<div class="td " style="left:215px;top:423.7px;left:214.5px;font-size:12px;letter-spacing:.15px">10003937</div>
<div class="td i" style="left:326.5px;top:423.7px;letter-spacing:-0.13px">Speaker/Amplifier JBL Eon 10G2</div>
<div class="td r" style="left:748px;top:423.9px;width:27px;font-size:12px;letter-spacing:0;">1</div>
<div class="td r" style="left:943px;top:423.9px;width:65px;font-size:12px;letter-spacing:0;">0.00</div>
<div class="td r" style="left:1011px;top:423.9px;width:62px;font-size:12px;letter-spacing:0;">0.00</div>
<div class="a" style="left:13px;top:458px;width:1131px;height:1px;background:#B76A30"></div>
<div class="cb k" style="left:14px;top:443px"></div>
<div class="cb" style="left:29px;top:443px"></div>
<div class="cb" style="left:44px;top:443px"></div>
<div class="cb" style="left:64px;top:443px"></div>
<div class="cb" style="left:89px;top:443px"></div>
<div class="cb" style="left:114px;top:443px"></div>
<div class="cb" style="left:134px;top:443px"></div>
<div class="cb" style="left:151px;top:443px"></div>
<div class="td " style="left:170px;top:442.7px;left:169.5px">Rent</div>
<div class="td " style="left:215px;top:442.7px;left:214.5px;font-size:12px;letter-spacing:-.3px">NS-KIT</div>
<div class="td" style="left:321px;top:442.7px">-</div>
<div class="td b" style="left:331px;top:442.7px;font-size:12.3px;letter-spacing:0;transform:scaleX(.89);transform-origin:0 0">NS-KIT</div>
<div class="td " style="left:625px;top:442.7px;left:625px">1d</div>
<div class="td r" style="left:678px;top:442.9px;width:27px;font-size:12px;letter-spacing:0;">5.00</div>
<div class="td r" style="left:708px;top:442.9px;width:37px;font-size:12px;letter-spacing:0;">20.00</div>
<div class="td r" style="left:748px;top:442.9px;width:27px;font-size:12px;letter-spacing:0;">1</div>
<div class="td " style="left:780px;top:442.7px;left:779.5px">Day</div>
<div class="td r" style="left:818px;top:442.9px;width:63px;font-size:12px;letter-spacing:0;">0.00</div>
<div class="td r" style="left:884px;top:442.9px;width:56px;font-size:12px;letter-spacing:0;">0.00</div>
<div class="td r" style="left:943px;top:442.9px;width:65px;font-size:12px;letter-spacing:0;">0.00</div>
<div class="td r" style="left:1011px;top:442.9px;width:62px;font-size:12px;letter-spacing:0;">0.00</div>
<div class="td" style="left:1125px;top:442.9px;width:19px;overflow:hidden;font-size:12px;letter-spacing:0">0.00</div>
<div class="a" style="left:13px;top:477px;width:1131px;height:1px;background:#B76A30"></div>
<div class="cb k" style="left:14px;top:462px"></div>
<div class="cb" style="left:29px;top:462px"></div>
<div class="cb k" style="left:44px;top:462px"></div>
<div class="cb" style="left:64px;top:462px"></div>
<div class="cb" style="left:89px;top:462px"></div>
<div class="cb" style="left:114px;top:462px"></div>
<div class="cb" style="left:134px;top:462px"></div>
<div class="cb" style="left:151px;top:462px"></div>
<div class="td " style="left:170px;top:461.7px;left:169.5px">Rent</div>
<div class="td " style="left:215px;top:461.7px;left:214.5px;font-size:12px;letter-spacing:.15px">10004896</div>
<div class="td i" style="left:326.5px;top:461.7px;letter-spacing:-0.23px">Cable XLR F - M Patch</div>
<div class="td r" style="left:748px;top:461.9px;width:27px;font-size:12px;letter-spacing:0;">5</div>
<div class="td r" style="left:943px;top:461.9px;width:65px;font-size:12px;letter-spacing:0;">0.00</div>
<div class="td r" style="left:1011px;top:461.9px;width:62px;font-size:12px;letter-spacing:0;">0.00</div>
<div class="a" style="left:13px;top:496px;width:1131px;height:1px;background:#B76A30"></div>
<div class="cb k" style="left:14px;top:481px"></div>
<div class="cb" style="left:29px;top:481px"></div>
<div class="cb" style="left:44px;top:481px"></div>
<div class="cb" style="left:64px;top:481px"></div>
<div class="cb" style="left:89px;top:481px"></div>
<div class="cb" style="left:114px;top:481px"></div>
<div class="cb" style="left:134px;top:481px"></div>
<div class="cb" style="left:151px;top:481px"></div>
<div class="td " style="left:170px;top:480.7px;left:169.5px">Rent</div>
<div class="td " style="left:215px;top:480.7px;left:214.5px;font-size:12px;letter-spacing:.15px">10002604</div>
<div class="td i" style="left:326.5px;top:480.7px;letter-spacing:-0.31px">Adaptor VGA HD15 M - 5x BNC M</div>
<div class="td r" style="left:748px;top:480.9px;width:27px;font-size:12px;letter-spacing:0;">1</div>
<div class="td r" style="left:943px;top:480.9px;width:65px;font-size:12px;letter-spacing:0;">0.00</div>
<div class="td r" style="left:1011px;top:480.9px;width:62px;font-size:12px;letter-spacing:0;">0.00</div>
<div class="a" style="left:13px;top:515px;width:1131px;height:1px;background:#B76A30"></div>
<div class="cb k" style="left:14px;top:500px"></div>
<div class="cb" style="left:29px;top:500px"></div>
<div class="cb" style="left:44px;top:500px"></div>
<div class="cb" style="left:64px;top:500px"></div>
<div class="cb" style="left:89px;top:500px"></div>
<div class="cb" style="left:114px;top:500px"></div>
<div class="cb" style="left:134px;top:500px"></div>
<div class="cb" style="left:151px;top:500px"></div>
<div class="td " style="left:170px;top:499.7px;left:169.5px">Rent</div>
<div class="td " style="left:215px;top:499.7px;left:214.5px;font-size:12px;letter-spacing:-.3px">NS-MISC KIT</div>
<div class="td" style="left:321px;top:499.7px">-</div>
<div class="td b" style="left:331px;top:499.7px;font-size:12.3px;letter-spacing:0;transform:scaleX(.89);transform-origin:0 0">NS-MISC</div>
<div class="td " style="left:625px;top:499.7px;left:625px">1d</div>
<div class="td r" style="left:678px;top:499.9px;width:27px;font-size:12px;letter-spacing:0;">5.00</div>
<div class="td r" style="left:708px;top:499.9px;width:37px;font-size:12px;letter-spacing:0;">20.00</div>
<div class="td r" style="left:748px;top:499.9px;width:27px;font-size:12px;letter-spacing:0;">1</div>
<div class="td " style="left:780px;top:499.7px;left:779.5px">Day</div>
<div class="td r" style="left:818px;top:499.9px;width:63px;font-size:12px;letter-spacing:0;">0.00</div>
<div class="td r" style="left:884px;top:499.9px;width:56px;font-size:12px;letter-spacing:0;">0.00</div>
<div class="td r" style="left:943px;top:499.9px;width:65px;font-size:12px;letter-spacing:0;">0.00</div>
<div class="td r" style="left:1011px;top:499.9px;width:62px;font-size:12px;letter-spacing:0;">0.00</div>
<div class="td" style="left:1125px;top:499.9px;width:19px;overflow:hidden;font-size:12px;letter-spacing:0">0.00</div>
<div class="a" style="left:13px;top:534px;width:1131px;height:1px;background:#B76A30"></div>
<div class="cb k" style="left:14px;top:519px"></div>
<div class="cb" style="left:29px;top:519px"></div>
<div class="cb k" style="left:44px;top:519px"></div>
<div class="cb" style="left:64px;top:519px"></div>
<div class="cb" style="left:89px;top:519px"></div>
<div class="cb" style="left:114px;top:519px"></div>
<div class="cb" style="left:134px;top:519px"></div>
<div class="cb" style="left:151px;top:519px"></div>
<div class="td " style="left:170px;top:518.7px;left:169.5px">Rent</div>
<div class="td " style="left:215px;top:518.7px;left:214.5px;font-size:12px;letter-spacing:.15px">10004275</div>
<div class="td i" style="left:326.5px;top:518.7px;letter-spacing:-0.13px">Microphone Vocal Dynamic Microphone Shure SM58</div>
<div class="td r" style="left:748px;top:518.9000000000001px;width:27px;font-size:12px;letter-spacing:0;">1</div>
<div class="td r" style="left:943px;top:518.9000000000001px;width:65px;font-size:12px;letter-spacing:0;">0.00</div>
<div class="td r" style="left:1011px;top:518.9000000000001px;width:62px;font-size:12px;letter-spacing:0;">0.00</div>
<div class="a" style="left:13px;top:535px;width:1131px;height:18px;background:#FD9A48"></div>
<div class="a" style="left:13px;top:553px;width:1131px;height:1px;background:#B76A30"></div>
<div class="cb k" style="left:14px;top:538px"></div>
<div class="cb" style="left:29px;top:538px"></div>
<div class="cb" style="left:44px;top:538px"></div>
<div class="cb" style="left:64px;top:538px"></div>
<div class="cb" style="left:89px;top:538px"></div>
<div class="cb" style="left:114px;top:538px"></div>
<div class="cb" style="left:134px;top:538px"></div>
<div class="cb" style="left:151px;top:538px"></div>
<div class="td " style="left:170px;top:537.7px;left:169.5px">Rent</div>
<div class="td " style="left:215px;top:537.7px;left:214.5px;font-size:12px;letter-spacing:.15px">10003940</div>
<div class="td i" style="left:326.5px;top:537.7px;letter-spacing:-0.13px">Speaker/Amplifier JBL Eon 15G2</div>
<div class="td r" style="left:748px;top:537.9000000000001px;width:27px;font-size:12px;letter-spacing:0;">1</div>
<div class="td r" style="left:943px;top:537.9000000000001px;width:65px;font-size:12px;letter-spacing:0;">0.00</div>
<div class="td r" style="left:1011px;top:537.9000000000001px;width:62px;font-size:12px;letter-spacing:0;">0.00</div>
<div class="a" style="left:27px;top:383px;width:1px;height:171px;background:#B76A30"></div>
<div class="a" style="left:42px;top:383px;width:1px;height:171px;background:#B76A30"></div>
<div class="a" style="left:57px;top:383px;width:1px;height:171px;background:#B76A30"></div>
<div class="a" style="left:82px;top:383px;width:1px;height:171px;background:#B76A30"></div>
<div class="a" style="left:107px;top:383px;width:1px;height:171px;background:#B76A30"></div>
<div class="a" style="left:132px;top:383px;width:1px;height:171px;background:#B76A30"></div>
<div class="a" style="left:147px;top:383px;width:1px;height:171px;background:#B76A30"></div>
<div class="a" style="left:167px;top:383px;width:1px;height:171px;background:#B76A30"></div>
<div class="a" style="left:212px;top:383px;width:1px;height:171px;background:#B76A30"></div>
<div class="a" style="left:312px;top:383px;width:1px;height:171px;background:#B76A30"></div>
<div class="a" style="left:622px;top:383px;width:1px;height:171px;background:#B76A30"></div>
<div class="a" style="left:677px;top:383px;width:1px;height:171px;background:#B76A30"></div>
<div class="a" style="left:707px;top:383px;width:1px;height:171px;background:#B76A30"></div>
<div class="a" style="left:747px;top:383px;width:1px;height:171px;background:#B76A30"></div>
<div class="a" style="left:777px;top:383px;width:1px;height:171px;background:#B76A30"></div>
<div class="a" style="left:817px;top:383px;width:1px;height:171px;background:#B76A30"></div>
<div class="a" style="left:883px;top:383px;width:1px;height:171px;background:#B76A30"></div>
<div class="a" style="left:942px;top:383px;width:1px;height:171px;background:#B76A30"></div>
<div class="a" style="left:1010px;top:383px;width:1px;height:171px;background:#B76A30"></div>
<div class="a" style="left:1075px;top:383px;width:1px;height:171px;background:#B76A30"></div>
<div class="a" style="left:313px;top:535px;width:309px;height:18px;border:1px solid #FF0000"></div>
<div class="a" style="left:13px;top:647px;width:1131px;height:16px;background:#EEE;border-top:1px solid #71849C;border-bottom:1px solid #71849C"></div>
<div class="a" style="left:13px;top:648px;width:15px;height:14px;background:#EEE;border-top:1px solid #fff;border-left:1px solid #fff"></div>
<div class="a" style="left:18px;top:651px;border:4.5px solid transparent;border-right:5px solid #1a1a1a;border-left-width:0"></div>
<div class="a" style="left:1128px;top:648px;width:16px;height:14px;background:#EEE;border-top:1px solid #fff;border-left:1px solid #71849C"></div>
<div class="a" style="left:1134px;top:651px;border:4.5px solid transparent;border-left:5px solid #1a1a1a;border-right-width:0"></div>
<div class="a" style="left:28px;top:647px;width:558px;height:16px;border:1px solid #FDBE00;background:linear-gradient(#EBA05C 0,#F2C6A4 8%,#EDB188 45%,#E9A274 80%,#EAA678)"></div>
<div class="a" style="left:305px;top:651px;width:1px;height:10px;background:#747E9C"></div>
<div class="a" style="left:306px;top:651px;width:1px;height:10px;background:#FBEDE2"></div>
<div class="a" style="left:307px;top:651px;width:1px;height:10px;background:#747E9C"></div>
<div class="a" style="left:308px;top:651px;width:1px;height:10px;background:#FBEDE2"></div>
<div class="a" style="left:309px;top:651px;width:1px;height:10px;background:#747E9C"></div>
<div class="a" style="left:310px;top:651px;width:1px;height:10px;background:#FBEDE2"></div>
<div class="l b" style="left:70.5px;top:678px;font-size:13.5px;line-height:15px;height:15px;color:#222;letter-spacing:.3px">Items</div>
<div class="f " style="left:120px;top:673px;width:100px;height:24px;"></div>
<div class="l b" style="left:235px;top:678px;font-size:13.5px;line-height:15px;height:15px;color:#222;letter-spacing:.3px">Labor</div>
<div class="f " style="left:287px;top:673px;width:100px;height:24px;"></div>
<div class="l b" style="left:446px;top:678px;font-size:13.5px;line-height:15px;height:15px;color:#222;letter-spacing:.3px">Sub Total</div>
<div class="f " style="left:525px;top:673px;width:100px;height:24px;"></div>
<div class="l b" style="left:636px;top:678px;font-size:13.5px;line-height:15px;height:15px;color:#222;letter-spacing:.3px">Tax</div>
<div class="f " style="left:670px;top:673px;width:100px;height:24px;"></div>
<div class="a" style="left:814px;top:673px;width:88px;height:24px;border:1px solid #B4B4B4;background:#fff"></div>
<div class="l b" style="left:841.5px;top:678px;font-size:13.5px;line-height:15px;height:15px;color:#222;letter-spacing:.3px">Total</div>
<div class="f " style="left:906px;top:673px;width:100px;height:24px;padding-top:3.5px"><b style="font-size:13.5px;color:#111;letter-spacing:.2px">0.00</b></div>
<div class="a" style="left:9px;top:708px;width:1142px;height:23px;border:1px solid #C0C0C0;border-top:2px solid #8A8A8A;border-left:1px solid #8A8A8A;background:#fff"></div>
</div></body></html>
